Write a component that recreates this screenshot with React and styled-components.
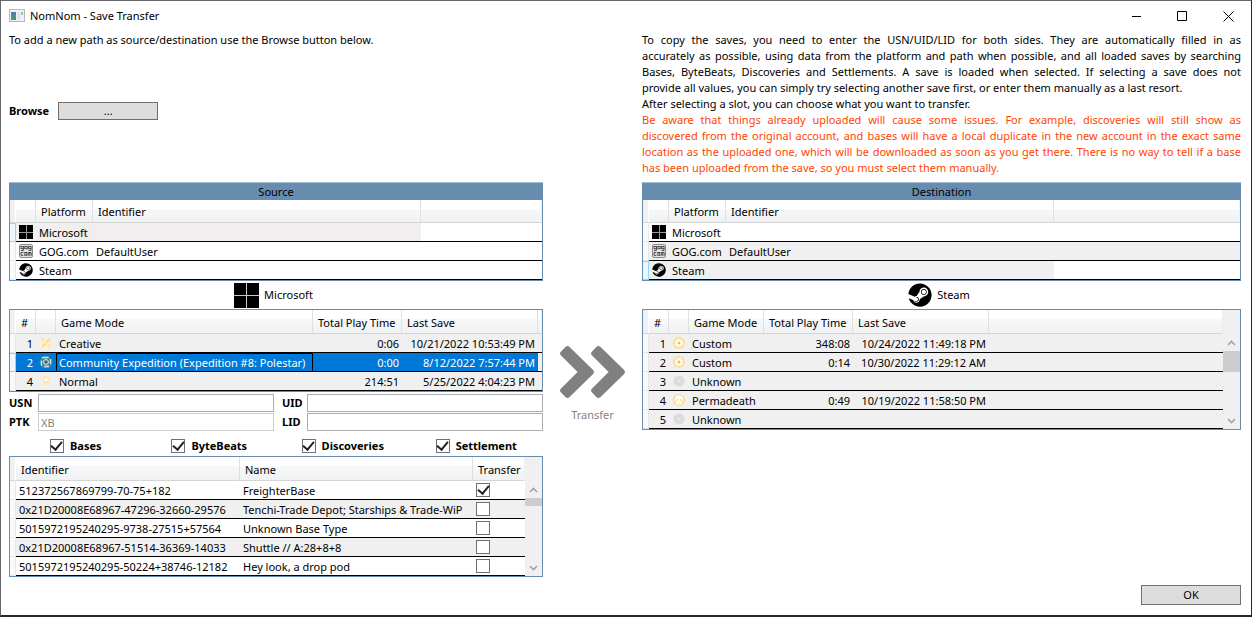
import React from "react";
import styled, { createGlobalStyle } from "styled-components";
import { FaSteam } from "react-icons/fa";

const BLUE = "#688caf";

const GlobalStyle = createGlobalStyle`
  * { box-sizing: border-box; }
  body { margin: 0; background: #fff; }
  body, button, input, table {
    font-family: "Noto Sans", "Open Sans", sans-serif;
    font-size: 11px;
    line-height: 16px;
    color: #000;
  }
`;

const Window = styled.div`
  min-height: 100vh;
  display: flex;
  flex-direction: column;
  background: #fff;
  border: solid #66666a;
  border-width: 1px 1px 2px 1px;
  border-right-color: #26282b;
  border-bottom-color: #26282b;
`;

const TitleBar = styled.header`
  display: flex;
  align-items: center;
  height: 30px;
  padding-left: 8px;
`;

const Title = styled.h1`
  flex: 1;
  margin: 0;
  padding-left: 5px;
  font-size: 11px;
  font-weight: 400;
`;

const CaptionButton = styled.button`
  width: 46px;
  height: 30px;
  padding: 0;
  border: 0;
  background: none;
  display: flex;
  align-items: center;
  justify-content: center;
`;

const Content = styled.main`
  flex: 1;
  display: grid;
  grid-template-columns: 534fr 99px 599fr;
  grid-template-rows: auto auto 1fr;
  padding: 1px 10px 10px 8px;
`;

const Intro = styled.section`
  grid-column: ${(p) => (p.$right ? 3 : 1)};
  grid-row: 1;
  min-height: 150px;
`;

const Para = styled.p`
  margin: 0;
  color: ${(p) => (p.$warn ? "#ff4500" : "#000")};
`;

const Line = styled.span`
  display: block;
  text-align: justify;
  text-align-last: justify;
  &:last-child { text-align-last: left; }
`;

const BrowseRow = styled.div`
  display: flex;
  align-items: center;
  gap: 9px;
  margin-top: 54px;
`;

const Label = styled.label`
  font-weight: 700;
`;

const PushButton = styled.button`
  width: 100px;
  height: ${(p) => p.$height}px;
  padding: 0;
  line-height: 16px;
  border: 1px solid #707070;
  background: #ddd;
`;

const Side = styled.section`
  grid-column: ${(p) => (p.$right ? 3 : 1)};
  grid-row: 2;
  min-width: 0;
`;

const Banner = styled.h2`
  margin: 0;
  height: 18px;
  padding-top: 1px;
  line-height: 16px;
  border-top: 1px solid #a3bbce;
  background: ${BLUE};
  font-size: 11px;
  font-weight: 400;
  text-align: center;
`;

const Frame = styled.div`
  display: flex;
  border: 1px solid ${BLUE};
  ${(p) => (p.$joined ? "border-top: 0;" : "")}
`;

const Table = styled.table`
  flex: 1;
  width: 100%;
  min-width: 0;
  table-layout: fixed;
  border-collapse: separate;
  border-spacing: 0;
`;

const Col = styled.col`
  width: ${(p) => (p.$width ? `${p.$width}px` : "auto")};
`;

const HeadCell = styled.th`
  height: ${(p) => p.$height}px;
  padding: 2px 0 0 5px;
  border-right: 1px solid #dfe0e2;
  border-bottom: 1px solid #d5d5d5;
  background: linear-gradient(#fff 0, #fff 40%, #f7f8fa 41%, #f0f1f3 100%);
  font-weight: 400;
  text-align: left;
  white-space: nowrap;
  &:first-child { background: #f0f0f0; border-right-color: #fff; }
  &:last-child { border-right-color: #eceef0; }
`;

const RowMark = styled.th`
  padding: 0;
  border: 1px solid ${(p) => (p.$current ? "#93d5f5" : "#e6e7e9")};
  border-width: ${(p) => (p.$current ? "1px 1px 1px 0" : "0 1px 1px 0")};
  background: ${(p) => (p.$current ? "#eaf8fe" : "#fafafb")};
`;

const Cell = styled.td`
  height: 19px;
  padding: ${(p) => (p.$icon ? 0 : 2)}px 3px 0 3px;
  border-bottom: 1px solid #000;
  background: ${(p) => p.$bg || "#fff"};
  color: ${(p) => (p.$selected ? "#fff" : "#000")};
  text-align: ${(p) => (p.$right ? "right" : "left")};
  white-space: nowrap;
  line-height: 16px;
  ${(p) => (p.$focus ? "outline: 1px solid #000; outline-offset: -1px;" : "")}
  svg { display: block; }
`;

const Scroll = styled.div`
  width: 17px;
  padding-top: 24px;
  display: flex;
  flex-direction: column;
  background: #f0f0f0;
`;

const ScrollButton = styled.button`
  height: 17px;
  padding: 0;
  border: 0;
  background: none;
  display: flex;
  align-items: center;
  justify-content: center;
`;

const Thumb = styled.div`
  height: ${(p) => p.$height}px;
  background: #cdcdcd;
`;

const Grow = styled.div`
  flex: 1;
`;

const Current = styled.div`
  display: flex;
  align-items: center;
  justify-content: center;
  gap: 5px;
  height: 28px;
  padding-right: 5px;
`;

const Fields = styled.div`
  display: grid;
  grid-template-columns: 29px 1fr 33px 1fr;
  row-gap: 1px;
  padding-top: 2px;
  align-items: center;
  label:nth-of-type(even) { padding-left: 8px; }
`;

const TextBox = styled.input`
  width: 100%;
  height: 18px;
  padding: 0 2px;
  line-height: 16px;
  border: 1px solid #abadb3;
  background: #fff;
  &:disabled { border-color: #cdced1; color: #838383; }
`;

const Checks = styled.div`
  display: grid;
  grid-template-columns: repeat(4, 1fr);
  justify-items: center;
  align-items: center;
  height: 20px;
  margin-top: 5px;
`;

const CheckLabel = styled.label`
  display: flex;
  align-items: center;
  gap: 6px;
  font-weight: 700;
`;

const CheckBox = styled.input`
  appearance: none;
  display: grid;
  place-items: center;
  width: 14px;
  height: 14px;
  margin: 0;
  border: 1px solid #707070;
  background: #fff;
  &:checked::after {
    content: "";
    width: 5px;
    height: 9px;
    margin-top: -3px;
    border: solid #212121;
    border-width: 0 2px 2px 0;
    transform: rotate(40deg);
  }
`;

const TransferButton = styled.button`
  grid-column: 2;
  grid-row: 2;
  align-self: start;
  justify-self: center;
  margin-top: 164px;
  padding: 0;
  border: 0;
  background: none;
  display: flex;
  flex-direction: column;
  align-items: center;
  gap: 9px;
  color: #838383;
`;

const Footer = styled.footer`
  grid-column: 1 / -1;
  display: flex;
  justify-content: flex-end;
  align-items: end;
`;

const AppIcon = () => (
  <svg width="16" height="14" viewBox="0 0 16 14" aria-hidden="true">
    <rect x="0.5" y="0.5" width="15" height="12" fill="#eef1f3" stroke="#b4b9bf" />
    <rect x="2" y="3" width="5" height="8" fill="#4b8f8c" />
    <rect x="2" y="3" width="5" height="3" fill="#4f7fa6" />
    <rect x="8" y="3" width="3" height="8" fill="#dfe3e6" />
    <rect x="12" y="3" width="2" height="3" fill="#9cc7a6" />
  </svg>
);

const MicrosoftIcon = ({ size }) => (
  <svg width={size} height={size} viewBox="0 0 25 25" aria-hidden="true">
    <rect width="25" height="25" fill="#c8c8c8" />
    <path d="M0 0h12v12H0zM13 0h12v12H13zM0 13h12v12H0zM13 13h12v12H13z" />
  </svg>
);

const SmallMicrosoftIcon = () => (
  <svg width="14" height="14" viewBox="0 0 14 14" aria-hidden="true">
    <rect width="14" height="14" fill="#9a9a9a" />
    <path d="M0 0h7v7H0zM8 0h6v7H8zM0 8h7v6H0zM8 8h6v6H8z" />
  </svg>
);

const GogIcon = () => (
  <svg width="14" height="14" viewBox="0 0 14 14" aria-hidden="true">
    <rect x="0.5" y="0.5" width="13" height="13" rx="1.5" fill="#e4e4e4" stroke="#8a8a8a" />
    <g fill="none" stroke="#3c3c3c" strokeWidth="0.9">
      <rect x="2" y="2.5" width="2.4" height="2.2" />
      <rect x="5.8" y="2.5" width="2.4" height="2.2" />
      <rect x="9.6" y="2.5" width="2.4" height="2.2" />
      <path d="M4.4 4.5v2H2M12 4.5v2H9.6M4.4 8.5H2v2.8h2.4" />
      <rect x="5.8" y="8.5" width="2" height="2.8" />
      <path d="M9.2 11.8V8.5h3v3.3M10.7 8.5v3.3" />
    </g>
  </svg>
);

const platformIcons = {
  Microsoft: <SmallMicrosoftIcon />,
  "GOG.com": <GogIcon />,
  Steam: <FaSteam size={14} />,
};

const modeShapes = {
  creative: (
    <>
      <circle cx="7" cy="7" r="6" fill="#fdf1d3" />
      <path d="M3 3l8 8M11 3l-8 8" stroke="#f8dc98" strokeWidth="2" />
      <path d="M4 4l6 6" stroke="#fff" />
    </>
  ),
  expedition: (
    <>
      <circle cx="7" cy="7" r="6.5" fill="#3b87a0" />
      <rect x="2.5" y="2.5" width="9" height="9" rx="2" fill="none" stroke="#d5e6e4" strokeWidth="1.4" strokeDasharray="5 2.5" />
      <circle cx="7" cy="7" r="2.4" fill="#2f6f86" stroke="#f3f1dc" />
    </>
  ),
  normal: (
    <>
      <path d="M7 1a4.2 4.2 0 0 1 4.2 4.3C11.2 8 8.6 9.5 7 13 5.4 9.5 2.8 8 2.8 5.3A4.2 4.2 0 0 1 7 1z" fill="#fbe6b4" stroke="#fdf1d3" strokeWidth="1.6" />
      <circle cx="7" cy="5.5" r="1.8" fill="#fff" />
    </>
  ),
  custom: (
    <>
      <circle cx="7" cy="7" r="6.2" fill="#fbe2a6" />
      <circle cx="7" cy="7" r="3" fill="#fff" stroke="#fff" strokeWidth="1.8" strokeDasharray="1.4 0.95" />
      <circle cx="7" cy="7" r="1.5" fill="#f4bd4a" />
    </>
  ),
  unknown: (
    <>
      <circle cx="7" cy="7" r="5.5" fill="#dcdcdc" />
      <circle cx="7" cy="7" r="1.2" fill="#e8e8e8" />
    </>
  ),
  permadeath: (
    <>
      <circle cx="7" cy="7" r="6.2" fill="#fbe0a2" />
      <path d="M7 2.5c2.5 0 4 1.6 4 3.6 0 1.3-.6 2.2-1.3 2.7v2.4H4.3V8.800C3.600 8.300 3 7.400 3 6.100c0-2 1.500-3.600 4-3.600z" fill="#fff" />
      <path d="M4.5 6.2H6v1.600H4.500zM8 6.200h1.500v1.600H8zM6.600 8.800h.8v1h-.8z" fill="#f8cf70" />
    </>
  ),
};

const ModeIcon = ({ kind }) => (
  <svg width="14" height="14" viewBox="0 0 14 14" aria-hidden="true">
    {modeShapes[kind]}
  </svg>
);

const copyHelp = [
  "To copy the saves, you need to enter the USN/UID/LID for both sides. They are automatically filled in as",
  "accurately as possible, using data from the platform and path when possible, and all loaded saves by searching",
  "Bases, ByteBeats, Discoveries and Settlements. A save is loaded when selected. If selecting a save does not",
  "provide all values, you can simply try selecting another save first, or enter them manually as a last resort.",
];

const uploadWarning = [
  "Be aware that things already uploaded will cause some issues. For example, discoveries will still show as",
  "discovered from the original account, and bases will have a local duplicate in the new account in the exact same",
  "location as the uploaded one, which will be downloaded as soon as you get there. There is no way to tell if a base",
  "has been uploaded from the save, so you must select them manually.",
];

const platforms = [
  ["Microsoft", ""],
  ["GOG.com", "DefaultUser"],
  ["Steam", ""],
];

const sourceSaves = [
  [1, "creative", "Creative", "0:06", "10/21/2022 10:53:49 PM"],
  [2, "expedition", "Community Expedition (Expedition #8: Polestar)", "0:00", "8/12/2022 7:57:44 PM"],
  [4, "normal", "Normal", "214:51", "5/25/2022 4:04:23 PM"],
];

const destinationSaves = [
  [1, "custom", "Custom", "348:08", "10/24/2022 11:49:18 PM"],
  [2, "custom", "Custom", "0:14", "10/30/2022 11:29:12 AM"],
  [3, "unknown", "Unknown", "", ""],
  [4, "permadeath", "Permadeath", "0:49", "10/19/2022 11:58:50 PM"],
  [5, "unknown", "Unknown", "", ""],
];

const bases = [
  ["512372567869799-70-75+182", "FreighterBase", true],
  ["0x21D20008E68967-47296-32660-29576", "Tenchi-Trade Depot; Starships & Trade-WiP", false],
  ["5015972195240295-9738-27515+57564", "Unknown Base Type", false],
  ["0x21D20008E68967-51514-36369-14033", "Shuttle // A:28+8+8", false],
  ["5015972195240295-50224+38746-12182", "Hey look, a drop pod", false],
];

function Head({ widths, titles, height = 24 }) {
  return (
    <>
      <colgroup>
        {widths.map((w, i) => <Col key={i} $width={w} />)}
      </colgroup>
      <thead>
        <tr>
          {titles.map((t, i) => <HeadCell key={i} $height={height}>{t}</HeadCell>)}
        </tr>
      </thead>
    </>
  );
}

function ScrollBar({ thumb }) {
  return (
    <Scroll>
      <ScrollButton aria-label="Scroll up">
        <svg width="9" height="6" viewBox="0 0 9 6"><path d="M1 5l3.5-3.5L8 5" fill="none" stroke="#a3a3a3" strokeWidth="1.6" /></svg>
      </ScrollButton>
      <Thumb $height={thumb} />
      <Grow />
      <ScrollButton aria-label="Scroll down">
        <svg width="9" height="6" viewBox="0 0 9 6"><path d="M1 1l3.5 3.5L8 1" fill="none" stroke="#a3a3a3" strokeWidth="1.6" /></svg>
      </ScrollButton>
    </Scroll>
  );
}

function PlatformTable({ current, shades }) {
  return (
    <Frame $joined>
      <Table>
        <Head widths={[6, 20, 57, 328, 0]} titles={["", "", "Platform", "Identifier", ""]} height={23} />
        <tbody>
          {platforms.map(([name, id], i) => (
            <tr key={name}>
              <RowMark $current={name === current} />
              <Cell $icon $bg={shades[i][0]}>{platformIcons[name]}</Cell>
              <Cell $bg={shades[i][0]}>{name}</Cell>
              <Cell $bg={shades[i][0]}>{id}</Cell>
              <Cell $bg={shades[i][1]} />
            </tr>
          ))}
        </tbody>
      </Table>
    </Frame>
  );
}

function SaveTable({ saves, widths, selected, thumb }) {
  return (
    <Frame>
      <Table>
        <Head widths={widths} titles={["", "#", "", "Game Mode", "Total Play Time", "Last Save", ""]} />
        <tbody>
          {saves.map(([slot, kind, mode, time, date]) => {
            const on = slot === selected;
            const look = { $selected: on, $bg: on ? "#0078d7" : "#f0f0f0" };
            return (
              <tr key={slot}>
                <RowMark $current={on} />
                <Cell $right {...look}>{slot}</Cell>
                <Cell $icon {...look}><ModeIcon kind={kind} /></Cell>
                <Cell $focus={on} {...look}>{mode}</Cell>
                <Cell $right {...look}>{time}</Cell>
                <Cell $right {...look}>{date}</Cell>
                <Cell $icon $bg="#f0f0f0" />
              </tr>
            );
          })}
        </tbody>
      </Table>
      {thumb ? <ScrollBar thumb={thumb} /> : null}
    </Frame>
  );
}

function BaseTable() {
  return (
    <Frame>
      <Table>
        <Head widths={[6, 224, 0, 52]} titles={["", "Identifier", "Name", "Transfer"]} />
        <tbody>
          {bases.map(([id, name, on], i) => {
            const bg = i % 2 ? "#f0f0f0" : "#fff";
            return (
              <tr key={id}>
                <RowMark />
                <Cell $bg={bg}>{id}</Cell>
                <Cell $bg={bg}>{name}</Cell>
                <Cell $icon $bg={bg}><CheckBox type="checkbox" defaultChecked={on} aria-label={`Transfer ${name}`} /></Cell>
              </tr>
            );
          })}
        </tbody>
      </Table>
      <ScrollBar thumb={8} />
    </Frame>
  );
}

export default function App() {
  return (
    <>
      <GlobalStyle />
      <Window>
        <TitleBar>
          <AppIcon />
          <Title>NomNom - Save Transfer</Title>
          <CaptionButton aria-label="Minimize">
            <svg width="11" height="11"><path d="M1 5.5h9" stroke="#000" /></svg>
          </CaptionButton>
          <CaptionButton aria-label="Maximize">
            <svg width="11" height="11"><path d="M.5 .5h9v9h-9z" fill="none" stroke="#000" /></svg>
          </CaptionButton>
          <CaptionButton aria-label="Close">
            <svg width="11" height="11"><path d="M.5 .5l10 10M10.5 .5l-10 10" stroke="#000" /></svg>
          </CaptionButton>
        </TitleBar>
        <Content>
          <Intro>
            <Para>To add a new path as source/destination use the Browse button below.</Para>
            <BrowseRow>
              <Label htmlFor="browse">Browse</Label>
              <PushButton id="browse" $height={18}>...</PushButton>
            </BrowseRow>
          </Intro>
          <Intro $right>
            <Para>{copyHelp.map((line) => <Line key={line}>{line}</Line>)}</Para>
            <Para>After selecting a slot, you can choose what you want to transfer.</Para>
            <Para $warn>{uploadWarning.map((line) => <Line key={line}>{line}</Line>)}</Para>
          </Intro>
          <Side>
            <Banner>Source</Banner>
            <PlatformTable current="Microsoft" shades={[["#f0eeee", "#fff"], ["#fff", "#fff"], ["#fff", "#fff"]]} />
            <Current><MicrosoftIcon size={25} />Microsoft</Current>
            <SaveTable saves={sourceSaves} widths={[6, 20, 20, 0, 89, 136, 4]} selected={2} />
            <Fields>
              <Label htmlFor="usn">USN</Label>
              <TextBox id="usn" />
              <Label htmlFor="uid">UID</Label>
              <TextBox id="uid" />
              <Label htmlFor="ptk">PTK</Label>
              <TextBox id="ptk" defaultValue="XB" disabled />
              <Label htmlFor="lid">LID</Label>
              <TextBox id="lid" />
            </Fields>
            <Checks>
              {["Bases", "ByteBeats", "Discoveries", "Settlement"].map((name) => (
                <CheckLabel key={name}><CheckBox type="checkbox" defaultChecked />{name}</CheckLabel>
              ))}
            </Checks>
            <BaseTable />
          </Side>
          <TransferButton>
            <svg width="65" height="52" viewBox="0 0 65 52" aria-hidden="true">
              <g fill="#808080" stroke="#808080" strokeWidth="6" strokeLinejoin="round">
                <path d="M7.5 3.2L30.8 26 7.5 48.8 3.2 44.5 21.7 26 3.2 7.5z" />
                <path d="M38.5 3.2L61.8 26 38.5 48.8 34.2 44.5 52.7 26 34.2 7.5z" />
              </g>
            </svg>
            Transfer
          </TransferButton>
          <Side $right>
            <Banner>Destination</Banner>
            <PlatformTable current="Steam" shades={[["#fff", "#fff"], ["#f0f0f0", "#f0f0f0"], ["#f0f0f0", "#fff"]]} />
            <Current><FaSteam size={24} />Steam</Current>
            <SaveTable saves={destinationSaves} widths={[6, 20, 20, 75, 89, 136, 0]} thumb={21} />
          </Side>
          <Footer><PushButton $height={20}>OK</PushButton></Footer>
        </Content>
      </Window>
    </>
  );
}
